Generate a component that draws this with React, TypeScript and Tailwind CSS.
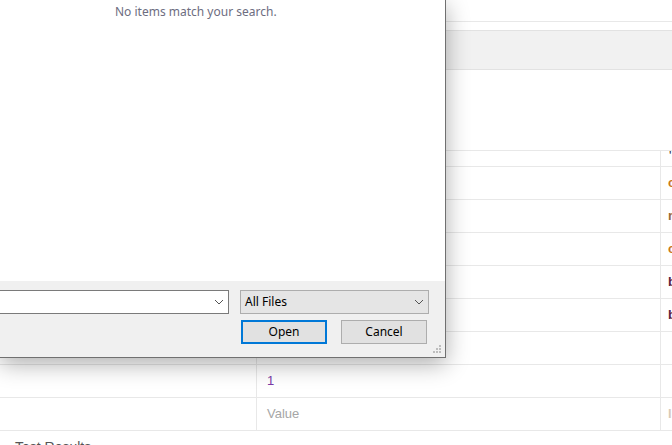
import React from "react";

const Chevron = () => (
  <svg width="10" height="6" viewBox="0 0 10 6" className="shrink-0">
    <polyline points="1,1 5,5 9,1" fill="none" stroke="#555" strokeWidth="1" />
  </svg>
);

const Grip = () => (
  <svg width="9" height="9" viewBox="0 0 9 9" className="absolute right-[3px] bottom-[3px]">
    {[
      [6, 0],
      [3, 3],
      [6, 3],
      [0, 6],
      [3, 6],
      [6, 6],
    ].map(([x, y], i) => (
      <rect key={i} x={x} y={y} width="2" height="2" fill="#bdbdbd" />
    ))}
  </svg>
);

type Row = { mid?: string; midClass?: string; side?: string; sideClass?: string };

const rows: Row[] = [
  { side: "c", sideClass: "text-[#c9791e]" },
  { side: "n", sideClass: "text-[#9a6a34]" },
  { side: "c", sideClass: "text-[#c9791e]" },
  { side: "b", sideClass: "text-[#5b1f3c]" },
  { side: "b", sideClass: "text-[#5b1f3c]" },
  {},
  { mid: "1", midClass: "text-[#7b3aa6]" },
  { mid: "Value", midClass: "text-[#a6a6a6]", side: "l", sideClass: "text-[#d8c9b5]" },
];

const App = () => {
  return (
    <div className="relative w-[672px] h-[445px] overflow-hidden bg-white font-['Liberation_Sans',sans-serif]">
      {/* page behind the dialog */}
      <div className="h-[21px]" />
      <div className="h-px bg-[#e8e8e8]" />
      <div className="h-[8px]" />
      <div className="h-[40px] bg-[#f1f1f1] border-y border-[#e2e2e2]" />
      <div className="h-[80px]" />
      <div className="border-t border-[#e8e8e8]">
        <div className="grid grid-cols-[257px_404px_1fr] h-[16px] border-b border-[#e8e8e8]">
          <div className="border-r border-[#e8e8e8]" />
          <div className="border-r border-[#e8e8e8]" />
          <div className="pl-[8px] text-[13px] leading-[10px] text-[#333]">'</div>
        </div>
        {rows.map((r, i) => (
          <div key={i} className="grid grid-cols-[257px_404px_1fr] h-[33px] border-b border-[#e8e8e8] text-[13px]">
            <div className="border-r border-[#e8e8e8]" />
            <div className={`border-r border-[#e8e8e8] pl-[10px] flex items-center ${r.midClass ?? ""}`}>{r.mid}</div>
            <div className={`pl-[7px] flex items-center font-bold ${r.sideClass ?? ""}`}>{r.side}</div>
          </div>
        ))}
      </div>
      <div className="pl-[15px] pt-[6px] text-[14px] leading-[20px] text-[#555]">Test Results</div>

      {/* open file dialog */}
      <div className="absolute left-0 top-0 w-[446px] h-[358px] flex flex-col bg-white border-r border-b border-[#707070] shadow-[0_6px_22px_rgba(0,0,0,0.32)] font-['Noto_Sans',sans-serif] text-[12px]">
        <div className="flex-1 pt-[3px] pl-[115px] text-[#6d6d7f]">No items match your search.</div>
        <div className="relative h-[76px] bg-[#f0f0f0] pt-[9px]">
          <div className="flex items-center">
            <div className="-ml-[20px] w-[249px] h-[24px] bg-white border border-[#7a7a7a] flex items-center justify-end pr-[4px]">
              <Chevron />
            </div>
            <div className="ml-[11px] w-[189px] h-[24px] bg-[#e5e5e5] border border-[#adadad] flex items-center justify-between pl-[4px] pr-[4px] text-black">
              <span>All Files</span>
              <Chevron />
            </div>
          </div>
          <div className="flex mt-[6px]">
            <button className="ml-[241px] w-[86px] h-[24px] bg-[#e1e1e1] border-2 border-[#0078d7] text-black">Open</button>
            <button className="ml-[14px] w-[86px] h-[24px] bg-[#e1e1e1] border border-[#adadad] text-black">Cancel</button>
          </div>
          <Grip />
        </div>
      </div>
    </div>
  );
};

export default App;
